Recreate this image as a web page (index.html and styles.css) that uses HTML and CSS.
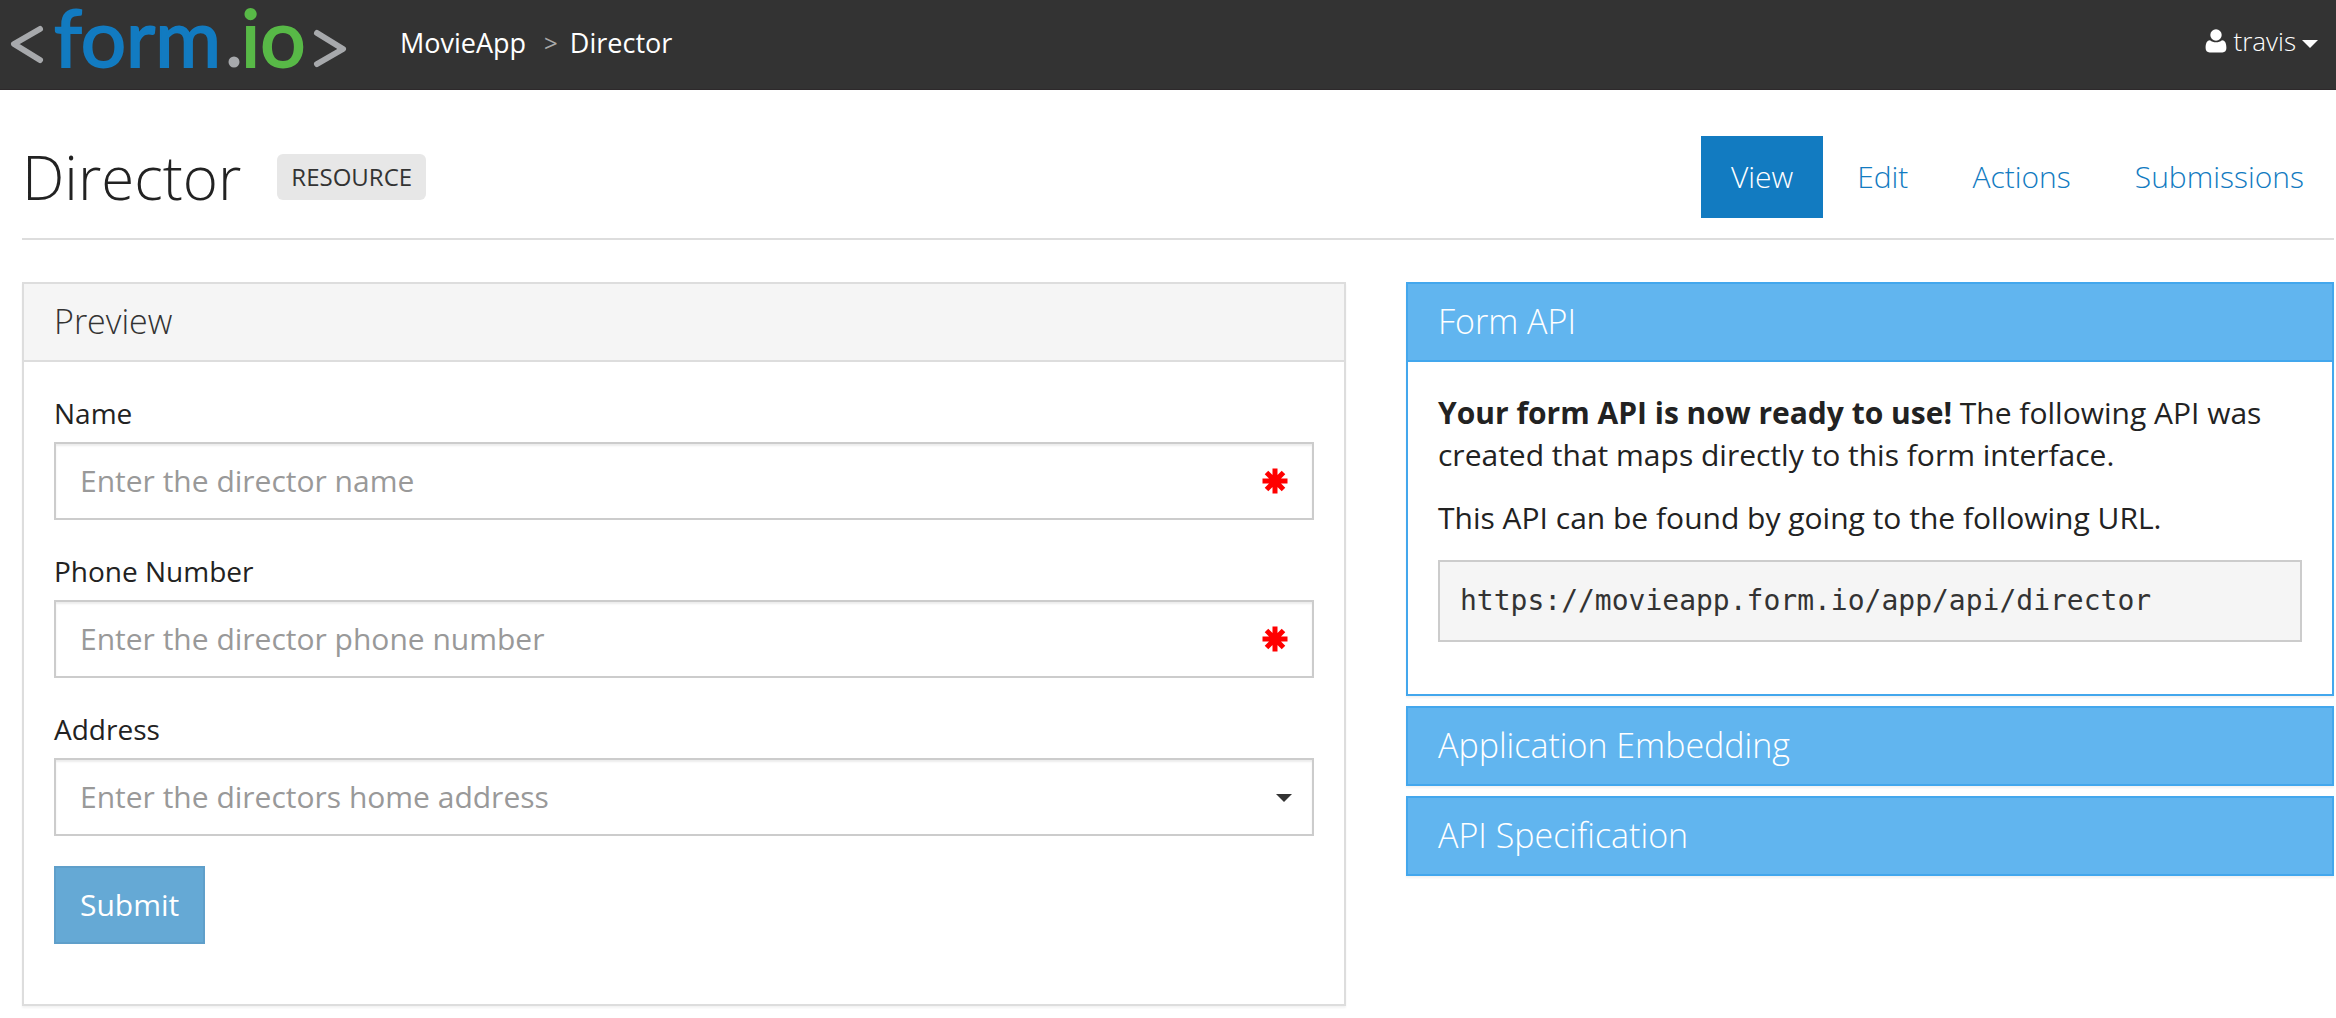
FILE: index.html
```html
<!DOCTYPE html>
<html lang="en">
<head>
<meta charset="utf-8">
<meta name="viewport" content="width=device-width, initial-scale=1">
<title>Director | form.io</title>
<link rel="stylesheet" href="styles.css">
</head>
<body>
<header class="navbar">
  <a class="brand" href="#" aria-label="form.io home">
    <svg class="logo" width="340" height="80" viewBox="0 0 340 80" aria-hidden="true">
      <g class="logo-bracket">
        <path d="M40 29 L14 44 L40 60"/>
        <path d="M317 33 L343 49 L317 64"/>
      </g>
      <text class="logo-form" x="54" y="67">form</text>
      <circle class="logo-dot" cx="234" cy="62" r="5.5"/>
      <text class="logo-io" x="241" y="67">io</text>
    </svg>
  </a>
  <nav class="crumbs" aria-label="Breadcrumb">
    <a href="#">MovieApp</a>
    <span class="crumb-sep">&gt;</span>
    <a href="#">Director</a>
  </nav>
  <button class="user" type="button">
    <svg width="22" height="24" viewBox="0 0 22 24" aria-hidden="true"><circle cx="11" cy="6" r="5.7"/><path d="M5 11.2C2 11.4 .6 14 .6 19c0 2.800 1.400 4.400 4 4.400h12.800c2.600 0 4-1.600 4-4.400 0-5-1.400-7.600-4.400-7.800C15.200 12.600 13.400 13.200 11 13.200S6.800 12.600 5 11.200z"/></svg>
    <span>travis</span>
    <span class="caret user-caret"></span>
  </button>
</header>

<main class="page">
  <div class="page-head">
    <h1>Director</h1>
    <span class="badge">RESOURCE</span>
    <nav class="tabs" aria-label="Form">
      <a class="active" href="#" aria-current="page">View</a>
      <a href="#">Edit</a>
      <a href="#">Actions</a>
      <a href="#">Submissions</a>
    </nav>
  </div>

  <div class="columns">
    <section class="panel">
      <h2>Preview</h2>
      <form class="form">
        <div class="field">
          <label for="name">Name</label>
          <div class="control">
            <input id="name" type="text" placeholder="Enter the director name" required>
            <svg class="required" width="26" height="26" viewBox="-13 -13 26 26" aria-hidden="true"><path d="M0-12.500V12.500M-12.500 0H12.500M-8.500-8.500L8.500 8.500M8.500-8.500L-8.500 8.500"/></svg>
          </div>
        </div>
        <div class="field">
          <label for="phone">Phone Number</label>
          <div class="control">
            <input id="phone" type="tel" placeholder="Enter the director phone number" required>
            <svg class="required" width="26" height="26" viewBox="-13 -13 26 26" aria-hidden="true"><path d="M0-12.500V12.500M-12.500 0H12.500M-8.500-8.500L8.500 8.500M8.500-8.500L-8.500 8.500"/></svg>
          </div>
        </div>
        <div class="field">
          <label for="address">Address</label>
          <div class="control">
            <select id="address"><option value="">Enter the directors home address</option></select>
            <span class="caret select-caret"></span>
          </div>
        </div>
        <button class="submit" type="submit">Submit</button>
      </form>
    </section>

    <div class="stack">
      <section class="panel info">
        <h2><a href="#">Form API</a></h2>
        <div class="panel-text">
          <p><strong>Your form API is now ready to use!</strong> The following API was created that maps directly to this form interface.</p>
          <p>This API can be found by going to the following URL.</p>
          <pre>https://movieapp.form.io/app/api/director</pre>
        </div>
      </section>
      <section class="panel info closed"><h2><a href="#">Application Embedding</a></h2></section>
      <section class="panel info closed"><h2><a href="#">API Specification</a></h2></section>
    </div>
  </div>
</main>
</body>
</html>
```

FILE: styles.css
```css
* { box-sizing: border-box; }

body {
  margin: 0;
  background: #fff;
  color: #222;
  font: 30px/42px "Open Sans", "Noto Sans", sans-serif;
}

a { color: inherit; text-decoration: none; }
h1, h2, p, pre { margin: 0; }
button, input, select { font: inherit; }

.navbar {
  display: flex;
  align-items: center;
  height: 90px;
  padding-right: 18px;
  background: #333;
  border-bottom: 1px solid #2d292b;
  color: #fff;
}

.brand { display: flex; align-self: flex-start; }
.logo { overflow: visible; }
.logo text { font-family: Lato, sans-serif; font-size: 80px; stroke-width: 2; }
.logo-bracket path { fill: none; stroke: #a7a9ac; stroke-width: 6; stroke-linecap: round; stroke-linejoin: round; }
.logo-form { fill: #127bc1; stroke: #127bc1; }
.logo-dot { fill: #a7a9ac; }
.logo-io { fill: #58b947; stroke: #58b947; }

.crumbs {
  display: flex;
  align-items: center;
  gap: 12px;
  margin-left: 60px;
  padding-bottom: 4px;
  font-size: 27px;
}
.crumb-sep { padding-left: 6px; color: #aaa; font-size: 24px; }

.user {
  display: flex;
  align-items: center;
  gap: 6px;
  margin-left: auto;
  padding: 0 0 8px;
  border: 0;
  background: none;
  color: #fff;
  font-size: 26px;
  font-weight: 300;
}
.user svg { fill: #fff; }

.caret {
  border: 8px solid transparent;
  border-top-color: currentColor;
  border-bottom: 0;
}
.user-caret { margin-top: 6px; }

.page { padding: 46px 2px 12px 22px; }

.page-head {
  display: flex;
  align-items: center;
  padding-bottom: 20px;
  border-bottom: 2px solid #ddd;
}
.page-head h1 { font-size: 60px; font-weight: 300; line-height: 82px; }
.badge {
  margin-left: 36px;
  padding: 0 14px;
  border-radius: 6px;
  background: #e7e7e7;
  color: #333;
  font-size: 24px;
  line-height: 46px;
}

.tabs { display: flex; gap: 4px; margin-left: auto; }
.tabs a { padding: 20px 30px; color: #127bc1; font-weight: 300; }
.tabs .active { background: #127bc1; color: #fff; }

.columns {
  display: grid;
  grid-template-columns: 331fr 232fr;
  gap: 60px;
  align-items: start;
  padding-top: 42px;
}

.panel {
  border: 2px solid #ddd;
  box-shadow: 0 2px 2px rgba(0, 0, 0, .05);
}
.panel h2 {
  padding: 16px 30px 18px;
  border-bottom: 2px solid #ddd;
  background: #f5f5f5;
  color: #333;
  font-size: 34px;
  font-weight: 300;
  line-height: 42px;
}

.info { border-color: #43a7ed; }
.panel.info h2 { border-color: #43a7ed; background: #61b5ef; color: #fff; }
.panel.closed h2 { border-bottom: 0; }
.stack { display: grid; gap: 10px; }
.panel-text { padding: 30px 30px 52px; }
.panel-text p { margin-bottom: 21px; }
pre {
  padding: 18px 20px;
  border: 2px solid #ccc;
  background: #f5f5f5;
  color: #333;
  font: 28px/42px "DejaVu Sans Mono", monospace;
}

.form { display: grid; gap: 30px; padding: 30px 30px 60px; }
.field { display: grid; gap: 8px; }
.field label { font-size: 28px; }
.control { position: relative; }
.control input, .control select {
  display: block;
  width: 100%;
  height: 78px;
  padding: 0 24px;
  border: 2px solid #ccc;
  border-radius: 0;
  background: #fff;
  box-shadow: inset 0 2px 2px rgba(0, 0, 0, .075);
  appearance: none;
}
.control input { padding-bottom: 2px; }
.control select, .control ::placeholder { color: #999; opacity: 1; }
.required {
  position: absolute;
  top: 26px;
  right: 26px;
  stroke: #f00;
  stroke-width: 5;
}
.select-caret { position: absolute; top: 36px; right: 22px; color: #333; }

.submit {
  justify-self: start;
  height: 78px;
  padding: 0 24px;
  border: 2px solid #5f9fca;
  background: #65a9d5;
  color: #fff;
  font-weight: 500;
}
```
